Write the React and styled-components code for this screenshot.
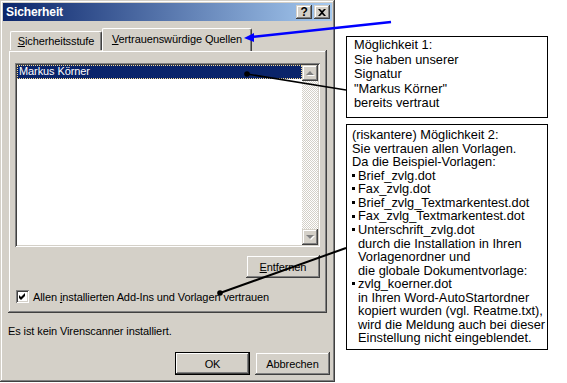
import styled, { createGlobalStyle, css } from 'styled-components';

const GlobalStyle = createGlobalStyle`
  html, body {
    margin: 0;
    padding: 0;
    background: #ffffff;
  }
  body {
    width: 567px;
    height: 383px;
    overflow: hidden;
    font-family: "Liberation Sans", Arial, sans-serif;
  }
`;

const face = '#d4d0c8';

const raised = css`
  box-shadow:
    inset -1px -1px #404040,
    inset 1px 1px ${face},
    inset -2px -2px #808080,
    inset 2px 2px #ffffff;
`;

const sunken = css`
  box-shadow:
    inset 1px 1px #808080,
    inset -1px -1px #ffffff,
    inset 2px 2px #404040,
    inset -2px -2px ${face};
`;

const Page = styled.div`
  position: relative;
  display: flex;
  width: 567px;
  height: 383px;
`;

const Dialog = styled.div`
  box-sizing: border-box;
  width: 335px;
  height: 382px;
  padding: 3px;
  background: ${face};
  font-size: 11px;
  letter-spacing: -0.1px;
  color: #000;
  ${raised};
`;

const TitleBar = styled.div`
  display: flex;
  align-items: center;
  justify-content: space-between;
  height: 18px;
  padding: 0 2px 0 3px;
  background: linear-gradient(to right, #0a246a, #a6caf0);
`;

const Title = styled.span`
  color: #fff;
  font-weight: bold;
  font-size: 12px;
`;

const CaptionButtons = styled.div`
  display: flex;
  gap: 2px;
`;

const CaptionButton = styled.div`
  display: flex;
  align-items: center;
  justify-content: center;
  width: 16px;
  height: 14px;
  background: ${face};
  font-weight: bold;
  font-size: 12px;
  ${raised};
`;

const Body = styled.div`
  padding: 7px 5px 0 5px;
`;

const Tabs = styled.div`
  display: flex;
  align-items: flex-end;
  height: 22px;
  padding-left: 2px;
  position: relative;
  z-index: 1;
`;

const Tab = styled.div`
  box-sizing: border-box;
  display: flex;
  align-items: center;
  justify-content: center;
  width: ${(p) => p.$width}px;
  height: ${(p) => (p.$active ? 23 : 19)}px;
  margin-bottom: ${(p) => (p.$active ? -1 : 0)}px;
  padding-bottom: ${(p) => (p.$active ? 3 : 1)}px;
  background: ${face};
  border-top: 1px solid #fff;
  border-left: 1px solid #fff;
  border-right: 1px solid #404040;
  border-radius: 2px 2px 0 0;
  box-shadow: inset -1px 0 #808080;
`;

const Key = styled.span`
  text-decoration: underline;
  text-underline-offset: 1px;
`;

const Panel = styled.div`
  box-sizing: border-box;
  width: 319px;
  height: 263px;
  padding: 13px 7px 0 7px;
  display: flex;
  flex-direction: column;
  ${raised};
`;

const ListBox = styled.div`
  box-sizing: border-box;
  display: flex;
  height: 184px;
  padding: 2px;
  background: #fff;
  ${sunken};
`;

const ListItems = styled.div`
  flex: 1;
`;

const ListItem = styled.div`
  height: 14px;
  line-height: 13px;
  padding-left: 2px;
  color: ${(p) => (p.$selected ? '#fff' : '#000')};
  background: ${(p) => (p.$selected ? '#0a246a' : 'transparent')};
  outline: ${(p) => (p.$selected ? '1px dotted #f5db95' : 'none')};
  outline-offset: -1px;
`;

const ScrollBar = styled.div`
  width: 16px;
  display: flex;
  flex-direction: column;
`;

const ScrollTrack = styled.div`
  flex: 1;
  background: repeating-conic-gradient(${face} 0 25%, #fff 0 50%) 0 0 / 2px 2px;
`;

const ScrollButton = styled.div`
  display: flex;
  align-items: center;
  justify-content: center;
  width: 16px;
  height: 16px;
  background: ${face};
  ${raised};
`;

const Arrow = styled.span`
  width: 0;
  height: 0;
  border-left: 4px solid transparent;
  border-right: 4px solid transparent;
  ${(p) =>
    p.$down
      ? css`border-top: 4px solid #808080;`
      : css`border-bottom: 4px solid #808080;`}
  filter: drop-shadow(1px 1px 0 #fff);
`;

const RightRow = styled.div`
  display: flex;
  justify-content: flex-end;
  margin-top: 8px;
`;

const Button = styled.div`
  box-sizing: border-box;
  display: flex;
  align-items: center;
  justify-content: center;
  width: ${(p) => p.$width || 75}px;
  height: 23px;
  background: ${face};
  ${(p) =>
    p.$default
      ? css`
          box-shadow:
            inset 0 0 0 1px #000,
            inset -2px -2px #404040,
            inset 2px 2px #fff,
            inset -3px -3px #808080;
        `
      : raised};
`;

const CheckRow = styled.label`
  display: flex;
  align-items: center;
  gap: 4px;
  margin-top: 12px;
  padding-left: 1px;
`;

const CheckBox = styled.span`
  box-sizing: border-box;
  display: block;
  width: 13px;
  height: 13px;
  background: #fff;
  ${sunken};
`;

const Status = styled.div`
  margin-top: 12px;
  height: 13px;
  line-height: 13px;
`;

const Footer = styled.div`
  display: flex;
  justify-content: flex-end;
  gap: 5px;
  margin-top: 14px;
  width: 322px;
`;

const Notes = styled.div`
  display: flex;
  flex-direction: column;
  gap: 6px;
  padding: 36px 0 0 11px;
`;

const Note = styled.div`
  box-sizing: border-box;
  width: 202px;
  height: ${(p) => p.$height}px;
  border: 1px solid #000;
  background: #fff;
  padding: ${(p) => p.$pad};
  font-size: 12.8px;
  line-height: ${(p) => p.$line}px;
  color: #000;
`;

const Line = styled.div`
  white-space: nowrap;
  padding-left: ${(p) => (p.$indent ? 6 : 0)}px;
`;

const Bullet = styled.span`
  display: inline-block;
  width: 3px;
  height: 3px;
  background: #000;
  margin: 0 3px 2px 0;
  vertical-align: middle;
`;

const Overlay = styled.svg`
  position: absolute;
  left: 0;
  top: 0;
  pointer-events: none;
  z-index: 5;
`;

function Item({ children }) {
  return (
    <Line>
      <Bullet />
      {children}
    </Line>
  );
}

export default function App() {
  return (
    <Page>
      <GlobalStyle />
      <Dialog>
        <TitleBar>
          <Title>Sicherheit</Title>
          <CaptionButtons>
            <CaptionButton>?</CaptionButton>
            <CaptionButton>
              <svg width="8" height="7" viewBox="0 0 8 7">
                <path d="M0 0h2l2 2 2-2h2L5 3.5 8 7H6L4 5 2 7H0l3-3.5z" fill="#000" />
              </svg>
            </CaptionButton>
          </CaptionButtons>
        </TitleBar>
        <Body>
          <Tabs>
            <Tab $width={92}>
              <span><Key>S</Key>icherheitsstufe</span>
            </Tab>
            <Tab $width={150} $active>
              <span><Key>V</Key>ertrauenswürdige Quellen</span>
            </Tab>
          </Tabs>
          <Panel>
            <ListBox>
              <ListItems>
                <ListItem $selected>Markus Körner</ListItem>
              </ListItems>
              <ScrollBar>
                <ScrollButton><Arrow /></ScrollButton>
                <ScrollTrack />
                <ScrollButton><Arrow $down /></ScrollButton>
              </ScrollBar>
            </ListBox>
            <RightRow>
              <Button $width={74}><span><Key>E</Key>ntfernen</span></Button>
            </RightRow>
            <CheckRow>
              <CheckBox>
                <svg width="13" height="13" viewBox="0 0 13 13">
                  <path d="M3 5l2 2 4-4v3l-4 4-2-2z" fill="#000" />
                </svg>
              </CheckBox>
              <span>Allen <Key>i</Key>nstallierten Add-Ins und Vorlagen vertrauen</span>
            </CheckRow>
          </Panel>
          <Status>Es ist kein Virenscanner installiert.</Status>
          <Footer>
            <Button $default>OK</Button>
            <Button>Abbrechen</Button>
          </Footer>
        </Body>
      </Dialog>

      <Notes>
        <Note $height={82} $line={14.6} $pad="1px 4px 0 7px">
          <Line>Möglichkeit 1:</Line>
          <Line>Sie haben unserer</Line>
          <Line>Signatur</Line>
          <Line>"Markus Körner"</Line>
          <Line>bereits vertraut</Line>
        </Note>
        <Note $height={226} $line={13.56} $pad="3px 4px 0 5px">
          <Line>(riskantere) Möglichkeit 2:</Line>
          <Line>Sie vertrauen allen Vorlagen.</Line>
          <Line>Da die Beispiel-Vorlagen:</Line>
          <Item>Brief_zvlg.dot</Item>
          <Item>Fax_zvlg.dot</Item>
          <Item>Brief_zvlg_Textmarkentest.dot</Item>
          <Item>Fax_zvlg_Textmarkentest.dot</Item>
          <Item>Unterschrift_zvlg.dot</Item>
          <Line $indent>durch die Installation in Ihren</Line>
          <Line $indent>Vorlagenordner und</Line>
          <Line $indent>die globale Dokumentvorlage:</Line>
          <Item>zvlg_koerner.dot</Item>
          <Line $indent>in Ihren Word-AutoStartordner</Line>
          <Line $indent>kopiert wurden (vgl. Reatme.txt),</Line>
          <Line $indent>wird die Meldung auch bei dieser</Line>
          <Line $indent>Einstellung nicht eingeblendet.</Line>
        </Note>
      </Notes>

      <Overlay width="567" height="383" viewBox="0 0 567 383">
        <line x1="391" y1="22" x2="251" y2="37" stroke="#0000ff" strokeWidth="2.5" />
        <polygon points="244,38 254,33 254,42" fill="#0000ff" />
        <line x1="247" y1="74" x2="346" y2="90" stroke="#000" strokeWidth="1.5" />
        <circle cx="247" cy="74" r="2.8" fill="#000" />
        <line x1="220" y1="293" x2="346" y2="248" stroke="#000" strokeWidth="2" />
        <circle cx="220" cy="293" r="2.8" fill="#000" />
      </Overlay>
    </Page>
  );
}
